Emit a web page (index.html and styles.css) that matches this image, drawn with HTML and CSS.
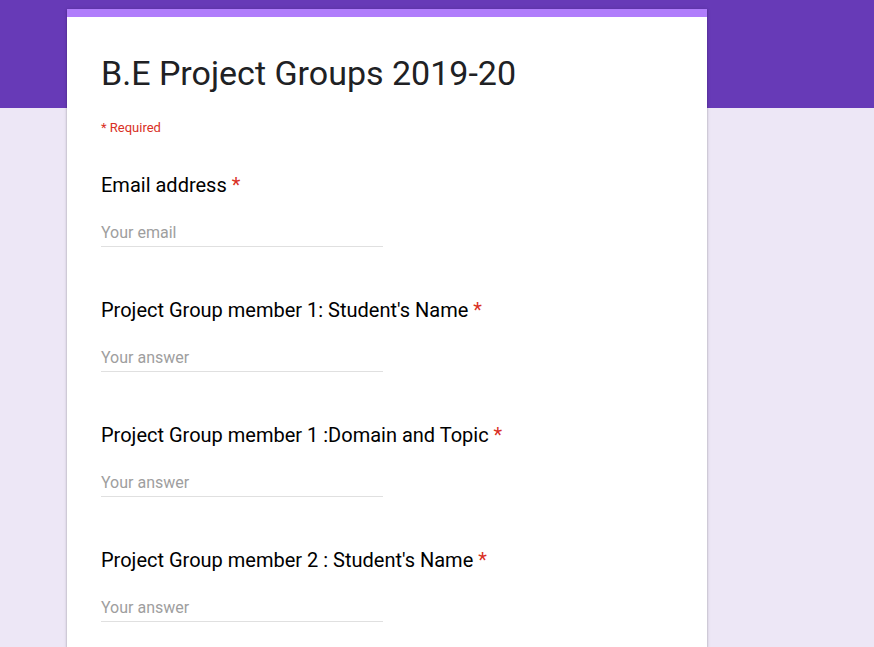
FILE: index.html
```html
<!DOCTYPE html>
<html>
<head>
<meta charset="utf-8">
<link rel="stylesheet" href="styles.css">
</head>
<body>
<div class="page">
  <div class="card">
    <div class="accent"></div>
    <div class="header">
      <h1 class="title">B.E Project Groups 2019-20</h1>
      <div class="required">* Required</div>
    </div>
    <div class="question">
      <div class="label">Email address <span class="star">*</span></div>
      <div class="field">Your email</div>
    </div>
    <div class="question">
      <div class="label">Project Group member 1: Student's Name <span class="star">*</span></div>
      <div class="field">Your answer</div>
    </div>
    <div class="question">
      <div class="label">Project Group member 1 :Domain and Topic <span class="star">*</span></div>
      <div class="field">Your answer</div>
    </div>
    <div class="question">
      <div class="label">Project Group member 2 : Student's Name <span class="star">*</span></div>
      <div class="field">Your answer</div>
    </div>
  </div>
</div>
</body>
</html>
```
FILE: styles.css
```css
html, body {
  margin: 0;
  padding: 0;
}
body {
  height: 647px;
  overflow: hidden;
  background: linear-gradient(to bottom, #673ab7 0, #673ab7 108px, #ede7f6 108px, #ede7f6 100%);
  font-family: Roboto, "Liberation Sans", sans-serif;
  color: #202124;
}
.page {
  padding-top: 9px;
  padding-left: 67px;
}
.card {
  width: 640px;
  background: #fff;
  box-shadow: 0 1px 2px rgba(0,0,0,0.25), 0 0 4px rgba(0,0,0,0.12);
  height: 640px;
}
.accent {
  height: 8px;
  background: #b07dfb;
}
.header {
  padding: 0 34px;
}
.title {
  margin: 0;
  padding-top: 36px;
  font-size: 34px;
  font-weight: 400;
  line-height: 40px;
  color: #202124;
}
.required {
  margin-top: 27px;
  font-size: 13px;
  line-height: 16px;
  color: #d93025;
}
.question {
  padding: 0 34px;
}
.label {
  padding-top: 36px;
  font-size: 20px;
  line-height: 26px;
  color: #000;
}
.star {
  color: #d93025;
}
.field {
  margin-top: 24px;
  width: 282px;
  font-size: 16px;
  line-height: 22px;
  color: #9e9e9e;
  border-bottom: 1px solid #e0e0e0;
  padding-bottom: 2px;
  margin-bottom: 14px;
}
```
